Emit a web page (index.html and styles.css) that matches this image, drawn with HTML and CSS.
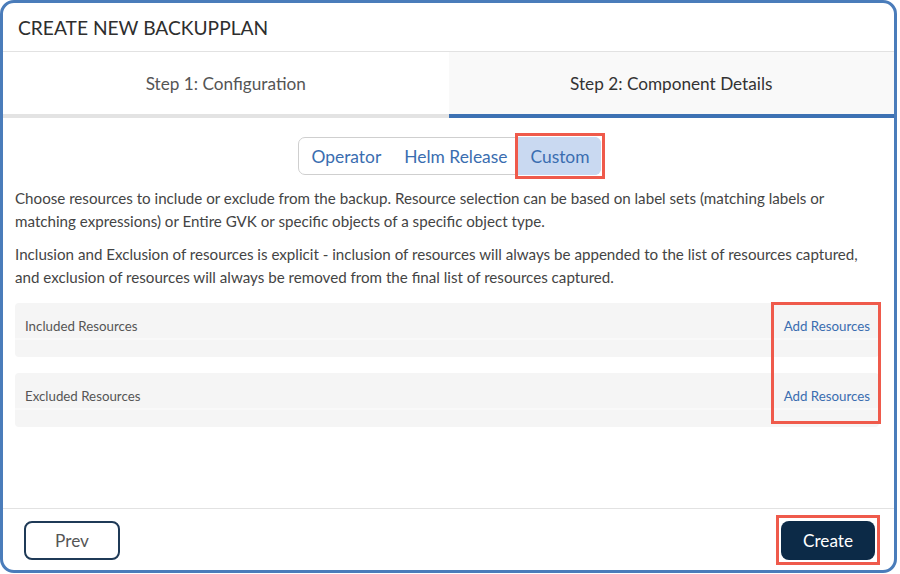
FILE: index.html
```html
<!DOCTYPE html>
<html>
<head>
<meta charset="utf-8">
<link rel="stylesheet" href="styles.css">
</head>
<body>
<div class="modal">
  <div class="header">CREATE NEW BACKUPPLAN</div>
  <div class="tabs">
    <div class="tab">Step 1: Configuration</div>
    <div class="tab active">Step 2: Component Details</div>
  </div>
  <div class="content">
    <div class="seg-wrap">
      <div class="seg">
        <span class="seg-item">Operator</span>
        <span class="seg-item">Helm Release</span>
        <span class="seg-item selected">Custom</span>
      </div>
    </div>
    <p class="desc">Choose resources to include or exclude from the backup. Resource selection can be based on label sets (matching labels or matching expressions) or Entire GVK or specific objects of a specific object type.</p>
    <p class="desc">Inclusion and Exclusion of resources is explicit - inclusion of resources will always be appended to the list of resources captured, and exclusion of resources will always be removed from the final list of resources captured.</p>
    <div class="panels">
      <div class="panel">
        <div class="panel-head"><span class="panel-title">Included Resources</span><span class="link">Add Resources</span></div>
        <div class="panel-body"></div>
      </div>
      <div class="panel">
        <div class="panel-head"><span class="panel-title">Excluded Resources</span><span class="link">Add Resources</span></div>
        <div class="panel-body"></div>
      </div>
      <div class="mark-links"></div>
    </div>
  </div>
  <div class="footer">
    <button class="btn btn-prev">Prev</button>
    <button class="btn btn-create">Create</button>
  </div>
</div>
</body>
</html>
```
FILE: styles.css
```css
html, body {
  margin: 0;
  padding: 0;
  background: #ffffff;
}
body {
  font-family: Lato, "Open Sans", sans-serif;
  width: 900px;
  height: 574px;
  overflow: hidden;
}
.modal {
  box-sizing: border-box;
  width: 897px;
  height: 573px;
  border: 3px solid #4a7cba;
  border-radius: 14px;
  background: #fff;
  display: flex;
  flex-direction: column;
  overflow: hidden;
}
.header {
  height: 48px;
  border-bottom: 1px solid #e2e2e2;
  padding: 0 15px;
  display: flex;
  align-items: center;
  font-size: 19.2px;
  color: #2e2e2e;
}
.tabs {
  display: flex;
  height: 66px;
}
.tab {
  flex: 1;
  box-sizing: border-box;
  display: flex;
  align-items: center;
  justify-content: center;
  font-size: 17.2px;
  color: #555;
  border-bottom: 4px solid #e3e3e3;
  background: #fff;
  padding-top: 1px;
}
.tab.active {
  background: #f9f9f9;
  color: #333;
  border-bottom-color: #3d72b4;
}
.content {
  flex: 1;
  padding: 0 15px 0 12px;
}
.seg-wrap {
  display: flex;
  justify-content: center;
  margin-top: 19px;
  margin-left: 5px;
}
.seg {
  display: flex;
  border: 1px solid #cfcfcf;
  border-radius: 7px;
  height: 36px;
}
.seg-item {
  display: flex;
  align-items: center;
  padding: 0 11px 0 12px;
  font-size: 17.4px;
  color: #3a6db0;
}
.seg-item.selected {
  position: relative;
  background: #c9d9f1;
  border-radius: 0 6px 6px 0;
  margin: -1px -1px -1px 0;
  padding-right: 11px;
}
.seg-item.selected::after {
  content: "";
  position: absolute;
  left: -3px;
  top: -4px;
  right: -4px;
  bottom: -4px;
  border: 3px solid #ef5a4b;
}
.desc {
  margin: 12px 0 0 0;
  font-size: 15.15px;
  line-height: 23px;
  color: #444;
}
.desc + .desc {
  margin-top: 10px;
}
.panels {
  position: relative;
  margin-top: 14px;
  display: flex;
  flex-direction: column;
  gap: 16px;
}
.panel {
  border-radius: 4px;
  overflow: hidden;
}
.panel-head {
  height: 35px;
  background: #f5f5f5;
  display: flex;
  align-items: flex-start;
  justify-content: space-between;
  padding: 0 10px;
  font-size: 13.3px;
  border-bottom: 2px solid #f9f9f9;
}
.panel-title {
  color: #555;
  padding-top: 15px;
}
.link {
  color: #3a6db0;
  padding-top: 15px;
  margin-right: -1px;
}
.panel-body {
  height: 17px;
  background: #f5f5f5;
}
.mark-links {
  position: absolute;
  right: -2px;
  top: -1px;
  width: 104px;
  height: 116px;
  border: 3px solid #ef5a4b;
}
.footer {
  border-top: 1px solid #e2e2e2;
  height: 61px;
  display: flex;
  align-items: center;
  justify-content: space-between;
  padding: 0 19px 0 21px;
}
.btn {
  font-family: Lato, "Open Sans", sans-serif;
  font-size: 17.2px;
  height: 39px;
  border-radius: 8px;
  cursor: pointer;
  margin-top: 1px;
}
.btn-prev {
  width: 96px;
  background: #fff;
  border: 2px solid #1f3a57;
  color: #555;
}
.btn-create {
  position: relative;
  width: 94px;
  background: #0c2a47;
  border: none;
  color: #fff;
}
.btn-create::after {
  content: "";
  position: absolute;
  left: -5px;
  top: -6px;
  right: -5px;
  bottom: -5px;
  border: 3px solid #ef5a4b;
}
```
